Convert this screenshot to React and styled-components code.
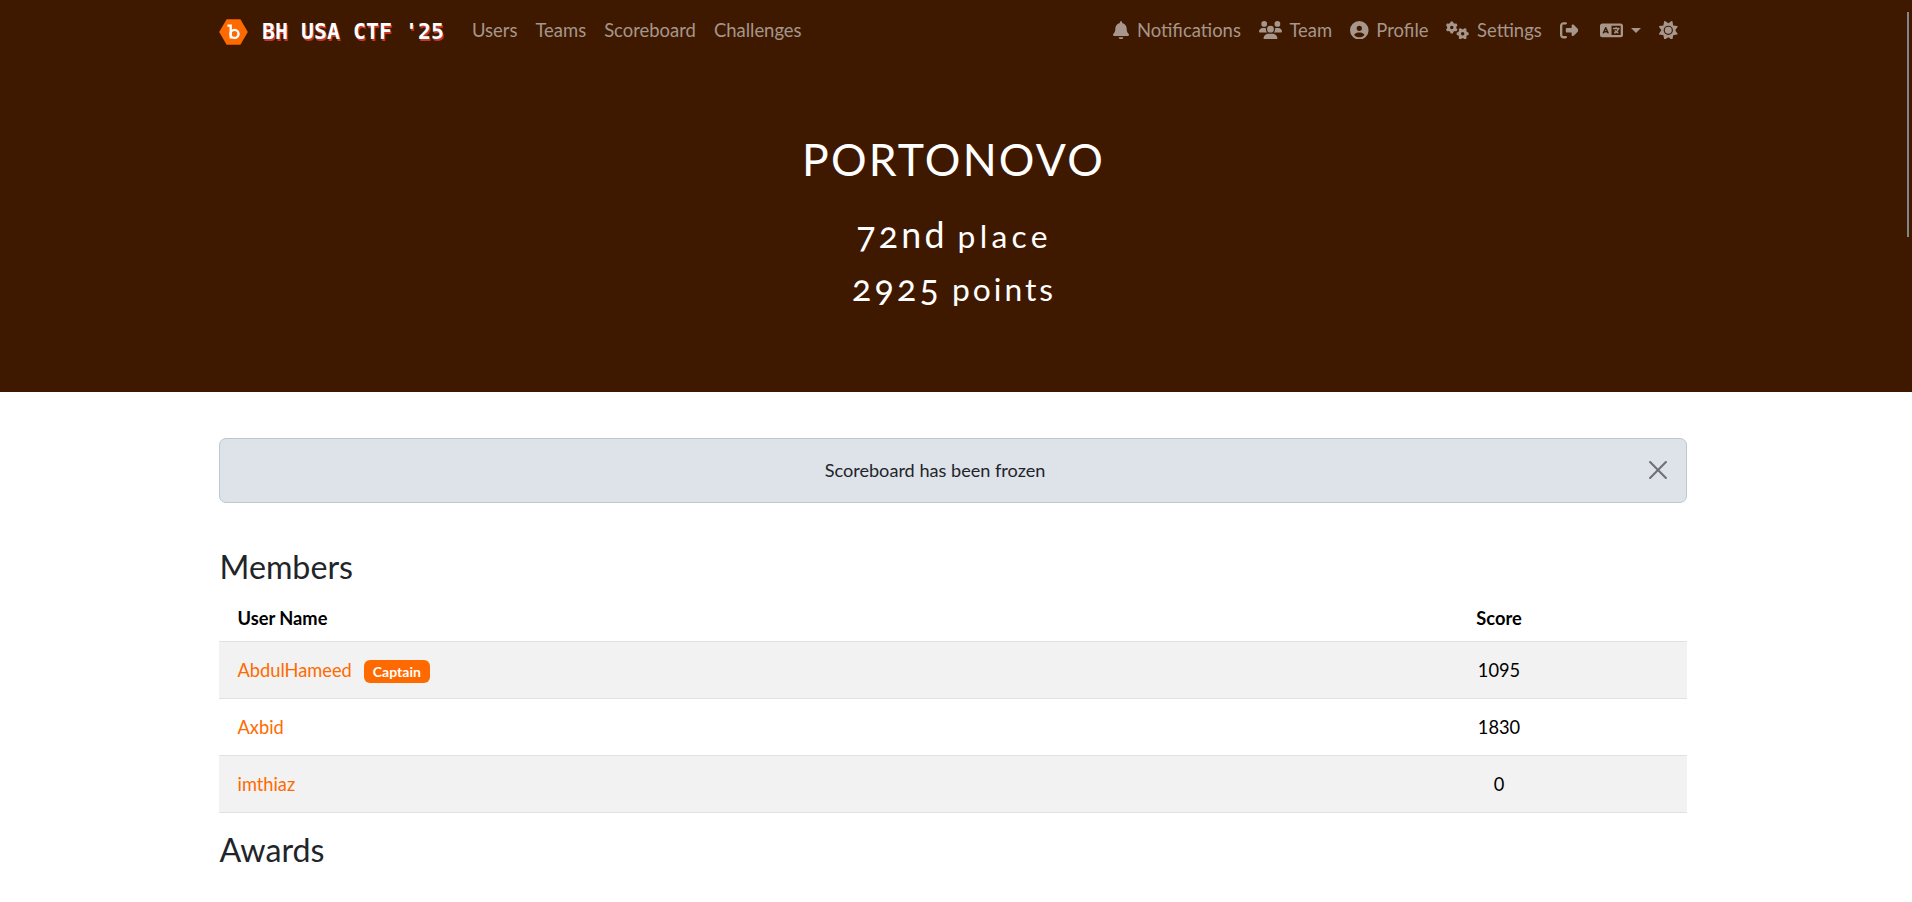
import React from "react";
import styled, { createGlobalStyle } from "styled-components";
import {
  FaBell,
  FaUsers,
  FaCircleUser,
  FaGears,
  FaRightFromBracket,
  FaLanguage,
  FaSun,
} from "react-icons/fa6";

const GlobalStyle = createGlobalStyle`
  *, *::before, *::after { box-sizing: border-box; }
  html, body { margin: 0; height: 100%; overflow: hidden; }
  body {
    background: #fff;
    color: #212529;
    font-family: Lato, "Liberation Sans", sans-serif;
    font-size: 18.13px;
    line-height: 1.5;
  }
  h1, h2, h3, p { margin: 0; font-weight: 400; }
`;

const Page = styled.div`
  position: relative;
  height: 902px;
  overflow: hidden;
`;

const Container = styled.div`
  width: 1468px;
  margin-left: 219px;
`;

const Hero = styled.header`
  height: 392px;
  background: #3e1900;
`;

const NavBar = styled(Container).attrs({ as: "nav" })`
  display: flex;
  align-items: center;
  height: 62px;
`;

const Brand = styled.a`
  display: flex;
  align-items: center;
  gap: 14px;
  width: 244px;
  padding-top: 1px;
  color: #fff;
  font: bold 21.6px/30px "DejaVu Sans Mono", monospace;
  text-shadow: 1px 2px 0 #c0392b;
  white-space: pre;
`;

const NavGroup = styled.div`
  display: flex;
  align-items: center;
  gap: 18px;
  margin-left: ${(p) => (p.$end ? "auto" : "9px")};
  margin-right: ${(p) => (p.$end ? "9.5px" : "0")};
  margin-bottom: 2px;
`;

const NavLink = styled.a`
  display: flex;
  align-items: center;
  gap: 7.6px;
  margin-right: ${(p) => p.$after || 0}px;
  color: #a6968b;
  font-size: 18.45px;
  line-height: 26px;
  white-space: nowrap;

  svg {
    flex: none;
    width: ${(p) => p.$icon || 18.6}px;
    height: 18.6px;
  }
`;

const Caret = styled.span`
  border-top: 5px solid currentColor;
  border-left: 5px solid transparent;
  border-right: 5px solid transparent;
`;

const Title = styled.h1`
  margin-top: 69px;
  padding-right: 5px;
  text-align: center;
  color: #fff;
  font-size: 44.5px;
  line-height: 56px;
  letter-spacing: 2.2px;
`;

const Stat = styled.h2`
  height: 42px;
  padding-right: 4px;
  margin-top: ${(p) => p.$top}px;
  text-align: center;
  color: #fff;
  font-size: 35.8px;
  line-height: 42px;
  letter-spacing: 3.2px;
  word-spacing: -2.5px;
  font-feature-settings: "onum" 1;

  small {
    font-size: 31.8px;
    line-height: 1;
    letter-spacing: ${(p) => p.$tracking}px;
  }
`;

const Alert = styled.div`
  display: flex;
  align-items: center;
  height: 65px;
  margin-top: 46px;
  padding: 0 19px;
  border: 1px solid #bdc6d2;
  border-radius: 7px;
  background: #dee2e9;

  svg { margin-bottom: 1px; }
`;

const AlertText = styled.span`
  flex: 1;
  padding-top: 1px;
  margin-right: 18px;
  text-align: center;
`;

const SectionTitle = styled.h3`
  margin-top: ${(p) => p.$top}px;
  padding-left: 0.5px;
  font-size: 32.2px;
  line-height: 38px;
`;

const Table = styled.div`
  margin-top: 9px;
  color: #000;
`;

const Row = styled.div`
  display: grid;
  grid-template-columns: 1fr 376px;
  align-items: center;
  height: ${(p) => (p.$head ? 47 : 57)}px;
  padding: 2px 0 0 18.5px;
  border-bottom: 1px solid #dee2e6;
  background: ${(p) => (p.$striped ? "#f2f2f2" : "#fff")};
  font-size: 18.25px;
  font-weight: ${(p) => (p.$head ? 700 : 400)};
`;

const Score = styled.span`
  text-align: center;
`;

const Member = styled.span`
  display: flex;
  align-items: center;
  gap: 12px;
  color: #ff6a00;
`;

const Badge = styled.span`
  height: 23px;
  padding: 0 9px;
  border-radius: 6px;
  background: #ff6a00;
  color: #fff;
  font-size: 14px;
  font-weight: 700;
  line-height: 24px;
`;

const ScrollThumb = styled.div`
  position: absolute;
  top: 12px;
  right: 3px;
  width: 2px;
  height: 225px;
  background: #858585;
`;

const Logo = () => (
  <svg width="29" height="26" viewBox="0 0 29 26">
    <path d="M7.6 0.3h13.8L28.8 13l-7.4 12.7H7.6L0.2 13z" fill="#ff6a00" />
    <path d="M8.4 6.6h3.3v12.9" fill="none" stroke="#fff" strokeWidth="2.3" />
    <circle cx="15.5" cy="14.9" r="4" fill="none" stroke="#fff" strokeWidth="2.4" />
  </svg>
);

const CloseIcon = () => (
  <svg width="18" height="18" viewBox="0 0 18 18" stroke="#6f7174" strokeWidth="2.1" strokeLinecap="round">
    <path d="M1.1 1.1l15.8 15.8M16.9 1.1L1.1 16.9" />
  </svg>
);

const members = [
  { name: "AbdulHameed", score: 1095, captain: true },
  { name: "Axbid", score: 1830 },
  { name: "imthiaz", score: 0 },
];

export default function App() {
  return (
    <Page>
      <GlobalStyle />
      <Hero>
        <NavBar>
          <Brand>
            <Logo />
            BH USA CTF '25
          </Brand>
          <NavGroup>
            <NavLink>Users</NavLink>
            <NavLink>Teams</NavLink>
            <NavLink>Scoreboard</NavLink>
            <NavLink>Challenges</NavLink>
          </NavGroup>
          <NavGroup $end>
            <NavLink $icon={16}><FaBell />Notifications</NavLink>
            <NavLink $icon={23}><FaUsers />Team</NavLink>
            <NavLink><FaCircleUser />Profile</NavLink>
            <NavLink $icon={23}><FaGears />Settings</NavLink>
            <NavLink $after={4}><FaRightFromBracket /></NavLink>
            <NavLink $icon={23}><FaLanguage /><Caret /></NavLink>
            <NavLink><FaSun /></NavLink>
          </NavGroup>
        </NavBar>
        <Title>PORTONOVO</Title>
        <Stat $top={27} $tracking={4.3}>72nd <small>place</small></Stat>
        <Stat $top={11} $tracking={3}>2925 <small>points</small></Stat>
      </Hero>
      <Container>
        <Alert>
          <AlertText>Scoreboard has been frozen</AlertText>
          <CloseIcon />
        </Alert>
        <SectionTitle $top={45}>Members</SectionTitle>
        <Table>
          <Row $head>
            <span>User Name</span>
            <Score>Score</Score>
          </Row>
          {members.map((m, i) => (
            <Row key={m.name} $striped={i % 2 === 0}>
              <Member>
                {m.name}
                {m.captain && <Badge>Captain</Badge>}
              </Member>
              <Score>{m.score}</Score>
            </Row>
          ))}
        </Table>
        <SectionTitle $top={18}>Awards</SectionTitle>
      </Container>
      <ScrollThumb />
    </Page>
  );
}
